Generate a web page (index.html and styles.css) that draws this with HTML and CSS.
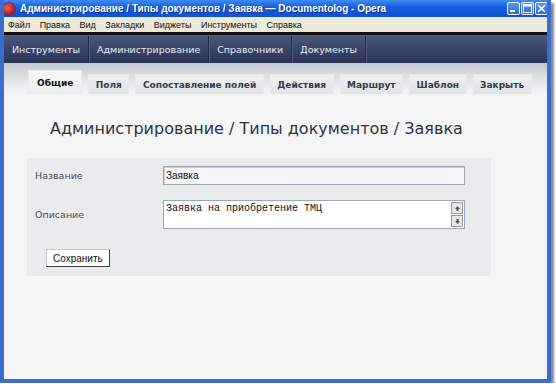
FILE: index.html
```html
<!DOCTYPE html>
<html lang="ru">
<head>
    <meta charset="UTF-8">
    <title>Администрирование / Типы документов / Заявка — Documentolog - Opera</title>
    <link rel="stylesheet" href="styles.css">
</head>
<body>
    <div class="window">
        <!-- Title bar -->
        <div class="titlebar">
            <span class="app-icon"></span>
            <span class="title">Администрирование / Типы документов / Заявка — Documentolog - Opera</span>
            <div class="win-buttons">
                <span class="win-btn"><svg width="9" height="9" viewBox="0 0 9 9"><rect x="1" y="6" width="5" height="2" fill="#fff"/></svg></span>
                <span class="win-btn"><svg width="9" height="9" viewBox="0 0 9 9"><rect x="0.5" y="0.5" width="8" height="8" fill="none" stroke="#fff"/><rect x="0.5" y="0.5" width="8" height="2" fill="#fff"/></svg></span>
                <span class="win-btn close"><svg width="9" height="9" viewBox="0 0 9 9"><path d="M1 1 L8 8 M8 1 L1 8" stroke="#fff" stroke-width="1.6"/></svg></span>
            </div>
        </div>

        <!-- Menu bar -->
        <div class="menubar">
            <span>Файл</span>
            <span>Правка</span>
            <span>Вид</span>
            <span>Закладки</span>
            <span>Виджеты</span>
            <span>Инструменты</span>
            <span>Справка</span>
        </div>

        <div class="page">
            <!-- Main navigation -->
            <div class="nav">
                <a class="nav-item">Инструменты</a>
                <a class="nav-item">Администрирование</a>
                <a class="nav-item">Справочники</a>
                <a class="nav-item">Документы</a>
            </div>

            <!-- Tabs -->
            <div class="tabs">
                <span class="tab active">Общие</span>
                <span class="tab">Поля</span>
                <span class="tab">Сопоставление полей</span>
                <span class="tab">Действия</span>
                <span class="tab">Маршрут</span>
                <span class="tab">Шаблон</span>
                <span class="tab">Закрыть</span>
            </div>

            <h1 class="heading">Администрирование / Типы документов / Заявка</h1>

            <!-- Form -->
            <div class="form-panel">
                <div class="form-row">
                    <label class="form-label">Название</label>
                    <div class="text-input">Заявка</div>
                </div>
                <div class="form-row">
                    <label class="form-label">Описание</label>
                    <div class="textarea">
                        <span class="textarea-text">Заявка на приобретение ТМЦ</span>
                        <div class="scroll">
                            <span class="scroll-btn"><svg width="7" height="7" viewBox="0 0 7 7"><path d="M3.5 1 L6 4 L4.5 4 L4.5 6 L2.5 6 L2.5 4 L1 4 Z" fill="#555"/></svg></span>
                            <span class="scroll-btn"><svg width="7" height="7" viewBox="0 0 7 7"><path d="M3.5 6 L6 3 L4.5 3 L4.5 1 L2.5 1 L2.5 3 L1 3 Z" fill="#555"/></svg></span>
                        </div>
                    </div>
                </div>
                <button class="save-btn">Сохранить</button>
            </div>
        </div>
    </div>
</body>
</html>
```

FILE: styles.css
```css
body { margin: 0; padding: 0; background: #fff; font-family: "DejaVu Sans", Verdana, sans-serif; }

/* Window frame */
.window {
    width: 543px;
    height: 379px;
    border: 4px solid #3d6ccf;
    border-top: none;
    display: flex;
    flex-direction: column;
    box-shadow: 3px 3px 2px rgba(60, 60, 60, 0.6);
    overflow: hidden;
}

/* Title bar */
.titlebar {
    height: 17px;
    margin: 0 -4px;
    padding: 0 3px 0 3px;
    background: linear-gradient(#3f8cf3, #1a5fe0 40%, #0f55d8 80%, #1352cc);
    display: flex;
    align-items: center;
    color: white;
    font-family: "Liberation Sans", Arial, sans-serif;
    font-size: 10px;
    font-weight: bold;
    white-space: nowrap;
}
.app-icon {
    width: 12px;
    height: 12px;
    border-radius: 50%;
    background: radial-gradient(circle at 40% 40%, #f26060, #b01818 70%);
    box-shadow: 0 0 0 1px #6a2a6a;
    margin-right: 5px;
    flex-shrink: 0;
}
.title { flex: 1; overflow: hidden; text-shadow: 1px 1px 0 #0a2f8a; }
.win-buttons { display: flex; gap: 1px; }
.win-btn {
    width: 13px;
    height: 13px;
    border: 1px solid #fff;
    border-radius: 2px;
    background: linear-gradient(#5a96f5, #2a68e6);
    display: flex;
    justify-content: center;
    align-items: center;
    box-sizing: border-box;
}

/* Menu bar */
.menubar {
    height: 15px;
    background: #ece9d8;
    display: flex;
    align-items: center;
    gap: 9.5px;
    padding-left: 4px;
    font-family: "Liberation Sans", Arial, sans-serif;
    font-size: 9px;
    color: #111;
    border-bottom: 3px solid #111;
}

/* Page */
.page { flex: 1; background: #f4f6f6; display: flex; flex-direction: column; }

.nav {
    height: 27px;
    background: linear-gradient(#4b5878, #37436a 50%, #2b3659);
    display: flex;
    border-top: 1px solid #56637f;
}
.nav-item {
    color: #e8ebf2;
    font-size: 9.5px;
    padding: 0 8px;
    display: flex;
    align-items: center;
    border-right: 1px solid #1e2744;
    box-shadow: 1px 0 0 #56617e;
}

.tabs {
    height: 33px;
    background: linear-gradient(#c3c8d1, #e7e9ec 60%, #f4f6f6);
    display: flex;
    align-items: flex-end;
    gap: 6px;
    padding-left: 24px;
    padding-bottom: 2px;
    box-sizing: border-box;
}
.tab {
    height: 19px;
    padding: 0 6.5px;
    background: linear-gradient(#eff0f1, #e1e3e5);
    border: 1px solid #e8eaeb;
    border-bottom: none;
    display: flex;
    align-items: center;
    font-size: 9px;
    font-weight: bold;
    color: #333d4a;
    white-space: nowrap;
}
.tab.active {
    height: 23px;
    background: linear-gradient(#f7f7f7, #eceeee);
    color: #111;
    padding: 0 8px;
}

.heading {
    margin: 23px 0 0 46px;
    font-size: 16px;
    font-weight: normal;
    color: #2f3342;
    height: 30px;
}

.form-panel {
    margin: 9px 0 0 23px;
    width: 464px;
    height: 118px;
    background: #e9ebec;
    box-sizing: border-box;
    padding-top: 8px;
}
.form-row { display: flex; align-items: center; }
.form-row + .form-row { margin-top: 15px; }
.form-label {
    width: 128px;
    padding-left: 8px;
    font-size: 9.5px;
    color: #4a4e57;
}
.text-input {
    width: 302px;
    height: 19px;
    box-sizing: border-box;
    border: 1px solid #9ea8b4;
    box-shadow: inset 1px 1px 0 #c4cbd2;
    background: #f6f7f7;
    font-family: "Liberation Sans", Arial, sans-serif;
    font-size: 10px;
    padding-left: 2px;
    display: flex;
    align-items: center;
    color: #111;
}
.textarea {
    width: 302px;
    height: 29px;
    box-sizing: border-box;
    border: 1px solid #9ea8b4;
    background: #fff;
    display: flex;
    justify-content: space-between;
}
.textarea-text {
    font-family: "Liberation Mono", "Courier New", monospace;
    font-size: 10px;
    padding: 2px 0 0 2px;
    color: #111;
}
.scroll { display: flex; flex-direction: column; gap: 1px; padding: 1px 1px 0 0; }
.scroll-btn {
    width: 12px;
    height: 12px;
    box-sizing: border-box;
    border: 1px solid #9a9a9a;
    background: #e6e6e6;
    display: flex;
    justify-content: center;
    align-items: center;
}

.save-btn {
    margin: 20px 0 0 19px;
    height: 18px;
    padding: 0 6px;
    background: #fff;
    border: 1px solid #c8c8c8;
    border-right-color: #444;
    border-bottom-color: #444;
    font-family: "Liberation Sans", Arial, sans-serif;
    font-size: 10px;
    color: #111;
}
```
